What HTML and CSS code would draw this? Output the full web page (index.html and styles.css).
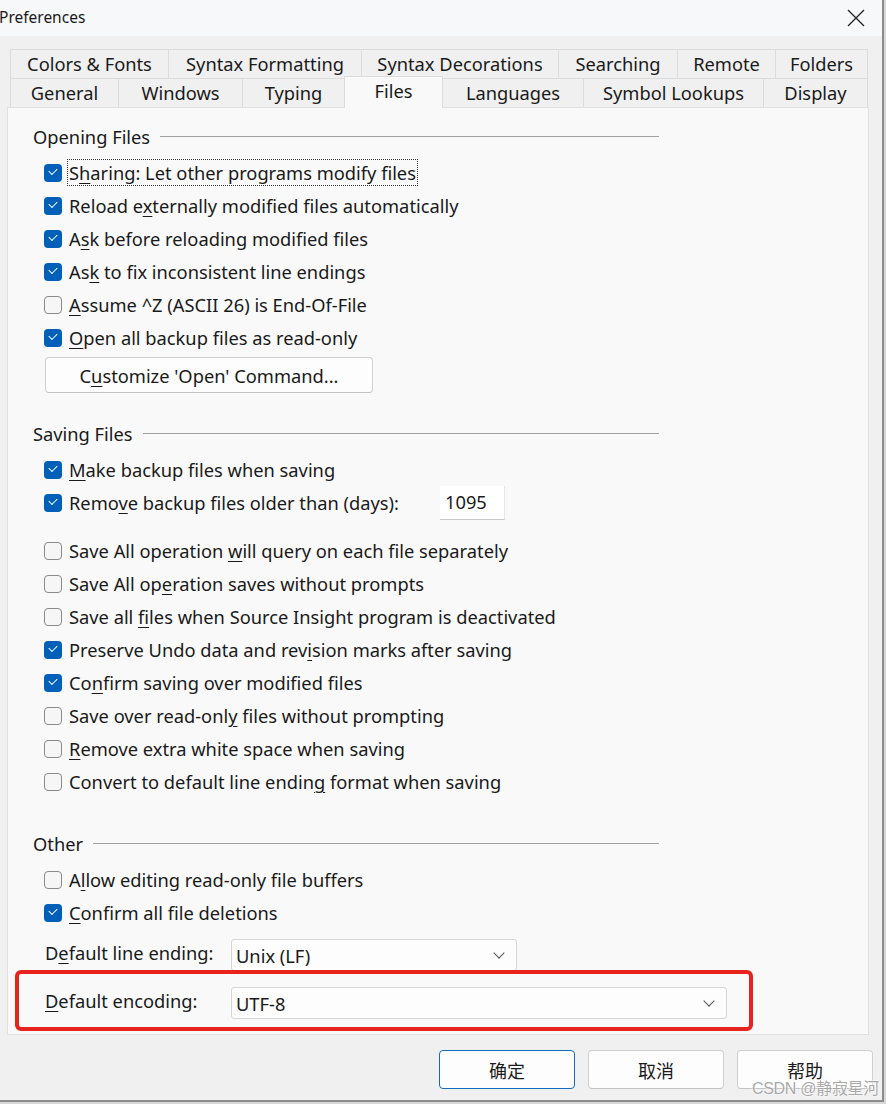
FILE: index.html
```html
<!DOCTYPE html>
<html lang="en">
  <head>
    <meta charset="UTF-8" />
    <meta name="viewport" content="width=device-width, initial-scale=1.0" />
    <title>Preferences</title>
    <link rel="stylesheet" href="styles.css">
  </head>
  <body>
    <div class="window">
      <div class="titlebar">
        <span class="title">Preferences</span>
        <svg class="close" width="18" height="18" viewBox="0 0 18 18">
          <path d="M1 1 L17 17 M17 1 L1 17" stroke="#222" stroke-width="1.3" fill="none" />
        </svg>
      </div>

      <div class="dialog">
        <!-- tab strip, two rows -->
        <div class="tabs">
          <div class="tab-row back">
            <div class="tab">Colors &amp; Fonts</div>
            <div class="tab">Syntax Formatting</div>
            <div class="tab">Syntax Decorations</div>
            <div class="tab">Searching</div>
            <div class="tab">Remote</div>
            <div class="tab">Folders</div>
          </div>
          <div class="tab-row front">
            <div class="tab">General</div>
            <div class="tab">Windows</div>
            <div class="tab">Typing</div>
            <div class="tab active">Files</div>
            <div class="tab">Languages</div>
            <div class="tab">Symbol Lookups</div>
            <div class="tab">Display</div>
          </div>
        </div>

        <div class="panel">
          <div class="group-title"><span>Opening Files</span><span class="rule"></span></div>
          <div class="options first">
            <label class="opt"><span class="box on"></span><span class="text focus">S<u>h</u>aring: Let other programs modify files</span></label>
            <label class="opt"><span class="box on"></span><span class="text">Reload e<u>x</u>ternally modified files automatically</span></label>
            <label class="opt"><span class="box on"></span><span class="text">A<u>s</u>k before reloading modified files</span></label>
            <label class="opt"><span class="box on"></span><span class="text">As<u>k</u> to fix inconsistent line endings</span></label>
            <label class="opt"><span class="box"></span><span class="text"><u>A</u>ssume ^Z (ASCII 26) is End-Of-File</span></label>
            <label class="opt"><span class="box on"></span><span class="text"><u>O</u>pen all backup files as read-only</span></label>
          </div>
          <button class="btn wide">C<u>u</u>stomize 'Open' Command...</button>

          <div class="group-title saving"><span>Saving Files</span><span class="rule"></span></div>
          <div class="options first">
            <label class="opt"><span class="box on"></span><span class="text"><u>M</u>ake backup files when saving</span></label>
            <label class="opt"><span class="box on"></span><span class="text fixed">Remo<u>v</u>e backup files older than (days):</span><span class="num">1095</span></label>
          </div>
          <div class="options spaced">
            <label class="opt"><span class="box"></span><span class="text">Save All operation <u>w</u>ill query on each file separately</span></label>
            <label class="opt"><span class="box"></span><span class="text">Save All op<u>e</u>ration saves without prompts</span></label>
            <label class="opt"><span class="box"></span><span class="text">Save all <u>f</u>iles when Source Insight program is deactivated</span></label>
            <label class="opt"><span class="box on"></span><span class="text">Preserve Undo data and rev<u>i</u>sion marks after saving</span></label>
            <label class="opt"><span class="box on"></span><span class="text">Co<u>n</u>firm saving over modified files</span></label>
            <label class="opt"><span class="box"></span><span class="text">Save over read-onl<u>y</u> files without prompting</span></label>
            <label class="opt"><span class="box"></span><span class="text"><u>R</u>emove extra white space when saving</span></label>
            <label class="opt"><span class="box"></span><span class="text">Convert to default line endin<u>g</u> format when saving</span></label>
          </div>

          <div class="group-title other"><span>Other</span><span class="rule"></span></div>
          <div class="options first">
            <label class="opt"><span class="box"></span><span class="text">A<u>l</u>low editing read-only file buffers</span></label>
            <label class="opt"><span class="box on"></span><span class="text"><u>C</u>onfirm all file deletions</span></label>
          </div>

          <div class="field line-ending">
            <span class="field-label">D<u>e</u>fault line ending:</span>
            <div class="select short"><span>Unix (LF)</span><span class="chevron"></span></div>
          </div>
          <div class="field encoding">
            <span class="field-label"><u>D</u>efault encoding:</span>
            <div class="select long"><span>UTF-8</span><span class="chevron"></span></div>
          </div>

          <!-- annotation drawn over the screenshot -->
          <div class="highlight"></div>
        </div>

        <div class="buttons">
          <button class="btn action default">确定</button>
          <button class="btn action">取消</button>
          <button class="btn action">帮助</button>
        </div>
      </div>

      <div class="watermark">CSDN @静寂星河</div>
    </div>
  </body>
</html>
```

FILE: styles.css
```css
body {
  margin: 0;
  padding: 0;
  background-color: #d8d8d8;
  font-family: "Noto Sans", "Noto Sans CJK SC", sans-serif;
  color: #1a1a1a;
}

.window {
  position: relative;
  width: 882px;
  height: 1100px;
  background-color: #f0f0f0;
  border-right: 2px solid #8c8c8c;
  border-bottom: 2px solid #8c8c8c;
  overflow: hidden;
}

.titlebar {
  height: 36px;
  background-color: #f7f8fa;
  display: flex;
  align-items: center;
  justify-content: space-between;
}

.title {
  font-size: 15.5px;
  margin-left: -1px;
  margin-top: -2px;
}

.close {
  margin-right: 17px;
  margin-top: -1px;
}

.dialog {
  padding: 13px 0 0 7px;
}

/* tabs */

.tabs {
  margin-left: 3px;
  width: 858px;
}

.tab-row {
  display: flex;
  align-items: flex-start;
  height: 29px;
}

.tab {
  flex: 0 0 auto;
  height: 29px;
  box-sizing: border-box;
  border: 1px solid #dcdcdc;
  border-bottom: none;
  border-right: none;
  background-color: #f0f0f0;
  font-size: 18.3px;
  line-height: 28px;
  text-align: center;
  white-space: nowrap;
}

.tab:last-child {
  border-right: 1px solid #dcdcdc;
}

.back .tab:nth-child(1) { width: 158px; }
.back .tab:nth-child(2) { width: 193px; }
.back .tab:nth-child(3) { width: 197px; }
.back .tab:nth-child(4) { width: 119px; }
.back .tab:nth-child(5) { width: 98px; }
.back .tab:nth-child(6) { width: 93px; }

.front .tab:nth-child(1) { width: 108px; }
.front .tab:nth-child(2) { width: 124px; }
.front .tab:nth-child(3) { width: 102px; }
.front .tab:nth-child(4) { width: 99px; }
.front .tab:nth-child(5) { width: 140px; }
.front .tab:nth-child(6) { width: 180px; }
.front .tab:nth-child(7) { width: 105px; }

.tab.active {
  height: 32px;
  margin-top: -2px;
  margin-bottom: -1px;
  background-color: #f9f9f9;
  border-right: 1px solid #dcdcdc;
  line-height: 28px;
  position: relative;
  z-index: 1;
}

.tab.active + .tab {
  border-left: none;
}

/* panel */

.panel {
  position: relative;
  width: 862px;
  height: 928px;
  box-sizing: border-box;
  background-color: #f9f9f9;
  border: 1px solid #e0e0e0;
  padding: 12px 0 0 25px;
  font-size: 18.3px;
}

.group-title {
  display: flex;
  align-items: center;
  width: 626px;
  height: 33px;
}

.group-title .rule {
  flex: 1;
  height: 1px;
  background-color: #a0a0a0;
  margin-left: 10px;
}

.group-title.saving {
  margin-top: 24px;
}

.group-title.other {
  margin-top: 29px;
}

.options.first {
  margin-top: 3px;
}

.options.spaced {
  margin-top: 15px;
}

.opt {
  display: flex;
  align-items: center;
  height: 33px;
  padding-left: 11px;
}

.box {
  width: 18px;
  height: 18px;
  box-sizing: border-box;
  border: 1px solid #8a8a8a;
  border-radius: 4px;
  background-color: #f6f6f6;
  margin-right: 5px;
  flex-shrink: 0;
  position: relative;
}

.box.on {
  border: none;
  background-color: #005fb8;
}

.box.on::after {
  content: "";
  position: absolute;
  left: 5px;
  top: 4px;
  width: 7px;
  height: 4px;
  border-left: 1.2px solid #ffffff;
  border-bottom: 1.2px solid #ffffff;
  transform: rotate(-45deg);
}

.text {
  white-space: nowrap;
  padding: 0 1px;
  border: 1px dotted transparent;
}

.text.focus {
  border-color: #333;
}

.text.fixed {
  width: 369px;
}

.num {
  width: 65px;
  height: 34px;
  box-sizing: border-box;
  background-color: #ffffff;
  border-bottom: 1px solid #c8c8c8;
  border-right: 1px solid #e6e6e6;
  padding: 3px 0 0 5px;
  margin-top: 1px;
}

u {
  text-decoration-thickness: 1px;
  text-underline-offset: 3px;
}

.btn {
  font-family: "Noto Sans", "Noto Sans CJK SC", sans-serif;
  font-size: 18.3px;
  color: #1a1a1a;
  background-color: #fdfdfd;
  border: 1px solid #d0d0d0;
  border-bottom-color: #c2c2c2;
  border-radius: 4px;
  cursor: pointer;
}

.btn.wide {
  width: 328px;
  height: 36px;
  margin: 3px 0 0 12px;
  padding: 0;
}

/* select fields */

.field {
  display: flex;
  align-items: center;
  padding-left: 12px;
}

.field-label {
  width: 186px;
  margin-bottom: 6px;
}

.line-ending {
  margin-top: 10px;
}

.encoding {
  margin-top: 16px;
}

.select {
  height: 32px;
  box-sizing: border-box;
  background-color: #fdfdfd;
  border: 1px solid #d6d6d6;
  border-radius: 3px;
  display: flex;
  align-items: center;
  justify-content: space-between;
  padding: 0 13px 0 4px;
}

.select.short {
  width: 286px;
}

.select.long {
  width: 496px;
}

.chevron {
  width: 7px;
  height: 7px;
  border-right: 1px solid #555;
  border-bottom: 1px solid #555;
  transform: rotate(45deg);
  margin-top: -5px;
}

.highlight {
  position: absolute;
  left: 7px;
  top: 862px;
  width: 738px;
  height: 61px;
  box-sizing: border-box;
  border: 4px solid #e8221c;
  border-radius: 6px;
}

/* bottom buttons */

.buttons {
  display: flex;
  justify-content: flex-end;
  gap: 13px;
  margin-top: 15px;
  padding-right: 9px;
}

.btn.action {
  width: 136px;
  height: 39px;
  font-size: 18px;
}

.btn.default {
  border: 1px solid #0f6cbd;
}

.watermark {
  position: absolute;
  right: 3px;
  bottom: 1px;
  font-family: "Liberation Sans", "Noto Sans CJK SC", sans-serif;
  font-size: 16px;
  letter-spacing: -0.3px;
  color: rgba(140, 140, 140, 0.75);
  text-shadow: 0 0 2px #ffffff, 0 0 2px #ffffff;
  pointer-events: none;
}
```
